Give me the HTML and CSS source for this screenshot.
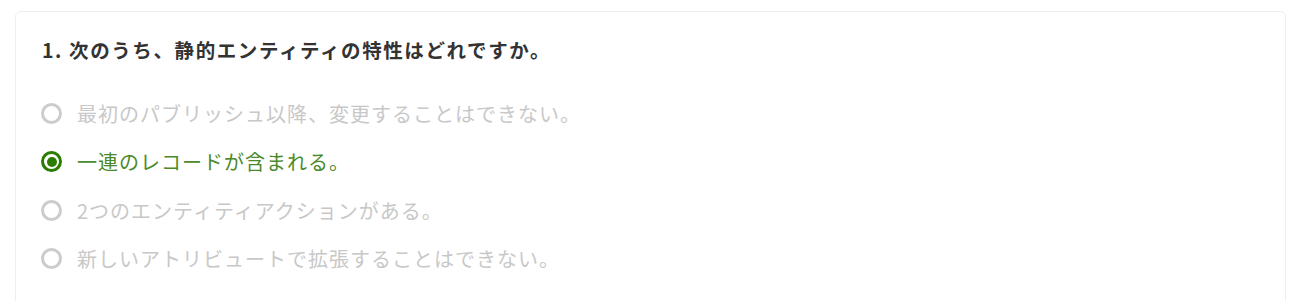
FILE: index.html
```html
<!DOCTYPE html>
<html lang="ja">
<head>
<meta charset="utf-8">
<link rel="stylesheet" href="styles.css">
</head>
<body>
<div class="card">
  <h2 class="question">1. 次のうち、静的エンティティの特性はどれですか。</h2>
  <ul class="options">
    <li class="option"><span class="radio"></span><span class="label">最初のパブリッシュ以降、変更することはできない。</span></li>
    <li class="option selected"><span class="radio"></span><span class="label">一連のレコードが含まれる。</span></li>
    <li class="option"><span class="radio"></span><span class="label">2つのエンティティアクションがある。</span></li>
    <li class="option"><span class="radio"></span><span class="label">新しいアトリビュートで拡張することはできない。</span></li>
  </ul>
</div>
</body>
</html>
```

FILE: styles.css
```css
html, body {
  margin: 0;
  padding: 0;
  background: #ffffff;
}
body {
  font-family: "Noto Sans CJK JP", "Noto Sans", sans-serif;
  padding: 11px 18px 0 15px;
  height: 301px;
  box-sizing: border-box;
  overflow: hidden;
}
.card {
  border: 1px solid #eeeeee;
  border-radius: 6px;
  padding: 24px 26px 40px 25px;
  min-height: 320px;
  box-sizing: border-box;
}
.question {
  margin: 0 0 0 1px;
  font-size: 19.5px;
  letter-spacing: 1.6px;
  font-weight: 700;
  color: #333333;
  line-height: 28px;
}
.options {
  list-style: none;
  margin: 35px 0 0 0;
  padding: 0;
  display: flex;
  flex-direction: column;
  gap: 20.5px;
}
.option {
  display: flex;
  align-items: center;
  height: 28px;
  color: #c8c8c8;
  font-size: 20px;
  letter-spacing: 1px;
}
.radio {
  width: 21px;
  height: 21px;
  border: 3px solid #cccccc;
  border-radius: 50%;
  box-sizing: border-box;
  margin-right: 15px;
  position: relative;
  flex: none;
}
.option.selected {
  color: #4a8a2a;
}
.option.selected .radio {
  border-color: #2a7d00;
}
.option.selected .radio::after {
  content: "";
  position: absolute;
  left: 2.5px;
  top: 2.5px;
  width: 10px;
  height: 10px;
  border-radius: 50%;
  background: #2a7d00;
}
```
